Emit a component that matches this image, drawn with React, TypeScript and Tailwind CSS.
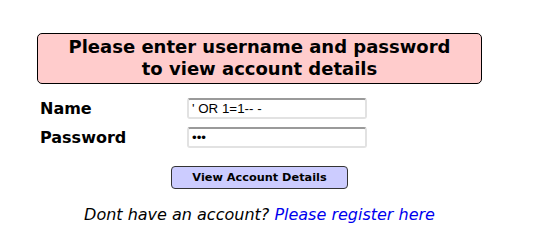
import React from "react";

const dejavu = { fontFamily: '"DejaVu Sans", Verdana, sans-serif' };

function Field({ label, value, type = "text" }: { label: string; value: string; type?: string }) {
  return (
    <div className="flex items-center h-[21px]">
      <label className="w-[147px] text-[16px] font-bold leading-[19px] text-black">{label}</label>
      <input
        type={type}
        value={value}
        readOnly
        className="w-[180px] h-[21px] px-[3px] rounded-[3px] border-2 border-[#e2e2e2] border-t-[#9a9a9a] bg-white text-[13.33px] text-black outline-none font-['Liberation_Sans',Arial,sans-serif]"
      />
    </div>
  );
}

export default function App() {
  return (
    <div className="w-[546px] h-[237px] bg-white" style={dejavu}>
      <div className="w-[445px] ml-[37px] pt-[33px]">
        {/* Heading box */}
        <div className="border border-black rounded-[5px] bg-[#ffcccc] pt-[2px] pb-[3px] text-center text-[18px] font-bold leading-[22px] text-black">
          Please enter username and password
          <br />
          to view account details
        </div>

        {/* Form */}
        <div className="mt-[14px] pl-[3px] flex flex-col gap-[8px]">
          <Field label="Name" value="' OR 1=1-- -" />
          <Field label="Password" value="abc" type="password" />
        </div>

        <div className="flex justify-center mt-[18px]">
          <button className="w-[177px] h-[23px] border border-[#333] rounded-[4px] bg-[#ccccff] text-[11.3px] font-bold text-black leading-none">
            View Account Details
          </button>
        </div>

        <p className="mt-[16px] text-center text-[16px] italic leading-[19px] text-black">
          Dont have an account? <a className="text-[#0000ee]">Please register here</a>
        </p>
      </div>
    </div>
  );
}
